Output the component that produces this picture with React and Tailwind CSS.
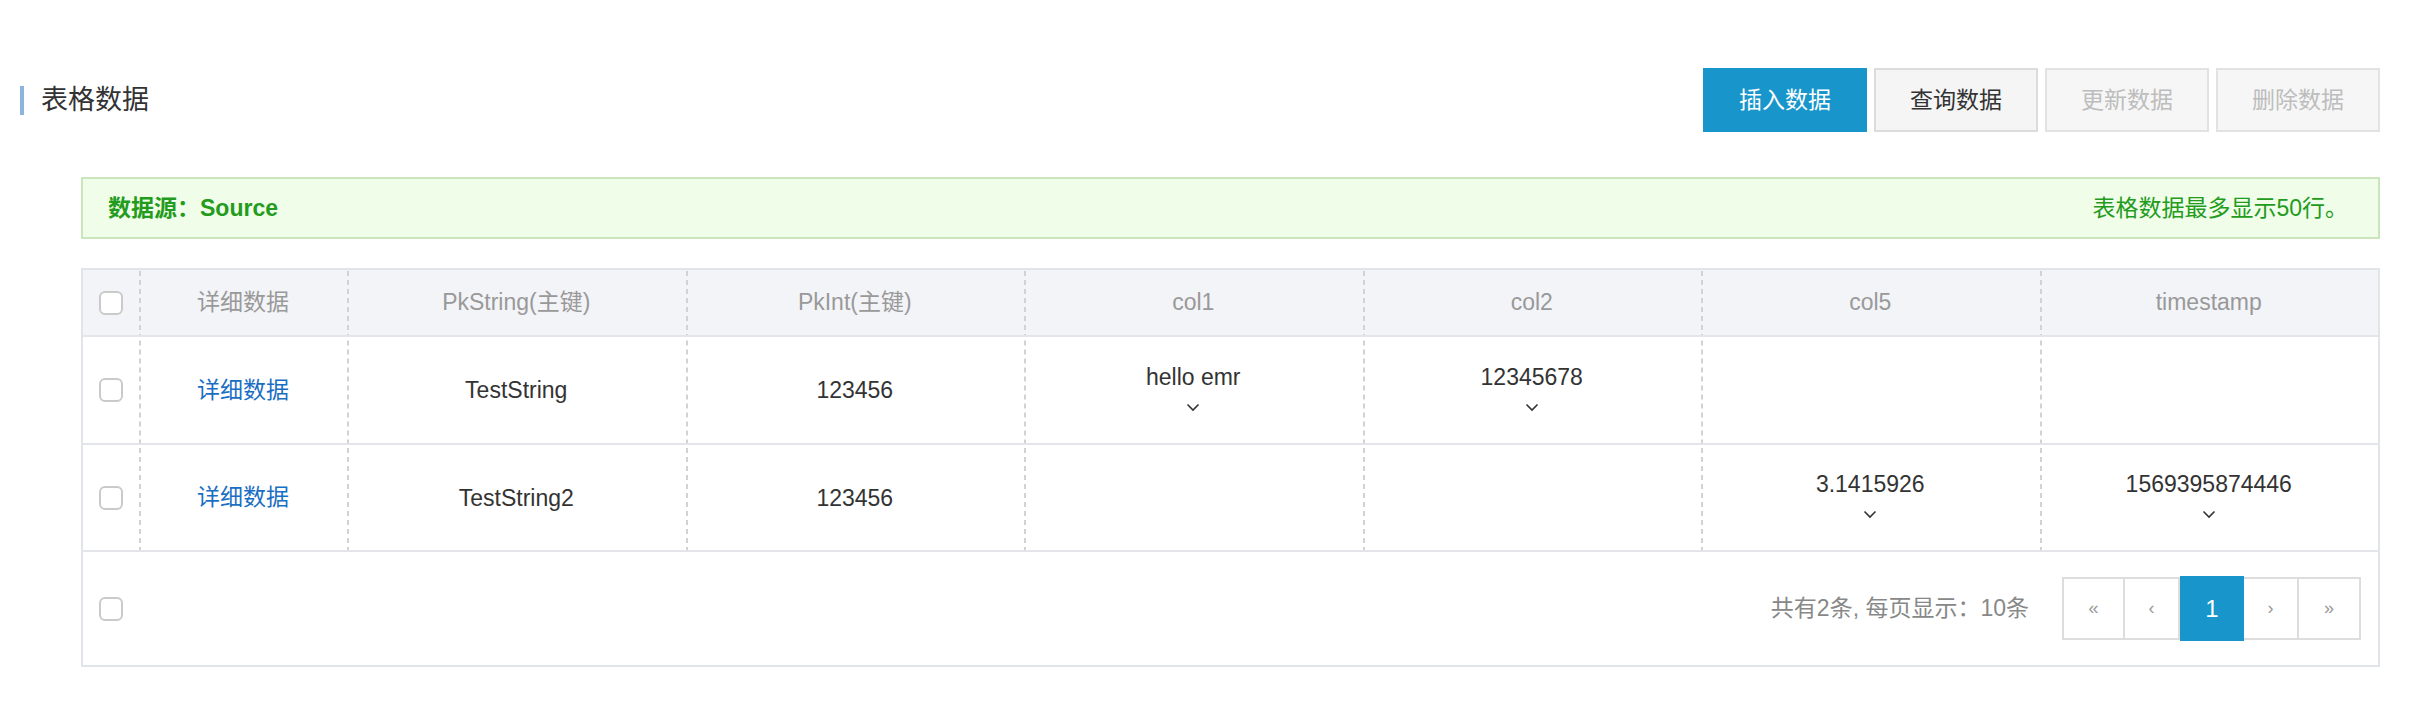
import { Fragment } from "react";

const columns = ["PkString(主键)", "PkInt(主键)", "col1", "col2", "col5", "timestamp"];

const rows = [
  {
    id: 1,
    height: "h-[108px]",
    cells: [
      { value: "TestString" },
      { value: "123456" },
      { value: "hello emr", expand: true },
      { value: "12345678", expand: true },
      { value: "" },
      { value: "" }
    ]
  },
  {
    id: 2,
    height: "h-[107px]",
    cells: [
      { value: "TestString2" },
      { value: "123456" },
      { value: "" },
      { value: "" },
      { value: "3.1415926", expand: true },
      { value: "1569395874446", expand: true }
    ]
  }
];

const gridCols = "grid grid-cols-[56px_208px_repeat(6,minmax(0,1fr))]";
// dashed column divider drawn as a repeating background strip on the cell's left edge
const dashed =
  "bg-[linear-gradient(#d2d2d2_60%,transparent_60%)] bg-[length:2px_9px] bg-repeat-y bg-left";

function Checkbox() {
  return <span className="block h-[24px] w-[24px] rounded-[6px] border-2 border-[#cacaca] bg-white" />;
}

function Chevron() {
  return (
    <svg width="14" height="9" viewBox="0 0 14 9" className="mt-[12px] mb-[6px]">
      <polyline points="1.5,1.5 7,7 12.5,1.5" fill="none" stroke="#333" strokeWidth="1.6" />
    </svg>
  );
}

function Cell({ value, expand }) {
  return (
    <div className={`flex flex-col items-center justify-center ${dashed}`}>
      {value && <span className="leading-[28px] text-[#333]">{value}</span>}
      {expand && <Chevron />}
    </div>
  );
}

export default function App() {
  return (
    <div className="min-h-screen bg-white pl-[20px] pr-[52px] pt-[68px] font-['Liberation_Sans','Noto_Sans_CJK_SC',sans-serif]">
      <div className="flex h-16 items-center justify-between">
        <div className="flex items-center">
          <span className="h-[29px] w-1 bg-[#8db4de]" />
          <h2 className="ml-[17px] text-[27px] leading-none text-[#333]">表格数据</h2>
        </div>
        <div className="flex gap-[7px] text-[23px]">
          <button className="h-16 w-[164px] bg-[#1896cb] text-white">插入数据</button>
          <button className="h-16 w-[164px] border-2 border-[#dcdcdc] bg-[#f5f5f5] text-[#333]">查询数据</button>
          <button className="h-16 w-[164px] border-2 border-[#e2e2e2] bg-[#f6f6f6] text-[#bdbdbd]">更新数据</button>
          <button className="h-16 w-[164px] border-2 border-[#e2e2e2] bg-[#f6f6f6] text-[#bdbdbd]">删除数据</button>
        </div>
      </div>

      <div className="ml-[61px] mt-[45px]">
        <div className="flex h-[62px] items-center justify-between border-2 border-[#cbe5bd] bg-[#f0fde9] pl-[25px] pr-[30px] text-[23px] text-[#239b1c]">
          <span className="font-bold">数据源：Source</span>
          <span>表格数据最多显示50行。</span>
        </div>

        <div className="mt-[29px] border-2 border-[#e1e4e8] text-[23px]">
          <div className={`${gridCols} h-[67px] border-b-2 border-[#e3e5ea] bg-[#f3f4f8] text-[#999]`}>
            <div className="flex items-center justify-center">
              <Checkbox />
            </div>
            <div className={`flex items-center justify-center ${dashed}`}>详细数据</div>
            {columns.map((col) => (
              <div key={col} className={`flex items-center justify-center ${dashed}`}>
                {col}
              </div>
            ))}
          </div>

          {rows.map((row) => (
            <div key={row.id} className={`${gridCols} ${row.height} border-b-2 border-[#e3e5ea]`}>
              <div className="flex items-center justify-center">
                <Checkbox />
              </div>
              <div className={`flex items-center justify-center text-[#1a6ec3] ${dashed}`}>详细数据</div>
              {row.cells.map((cell, index) => (
                <Fragment key={index}>
                  <Cell value={cell.value} expand={cell.expand} />
                </Fragment>
              ))}
            </div>
          ))}

          <div className="flex h-[113px] items-center pr-[17px]">
            <div className="flex w-[56px] items-center justify-center">
              <Checkbox />
            </div>
            <span className="ml-auto mr-[33px] text-[#888]">共有2条, 每页显示：10条</span>
            <div className="flex h-[63px] items-stretch">
              <span className="flex w-[63px] items-center justify-center border-2 border-[#dddddd] text-[18px] text-[#999]">«</span>
              <span className="flex w-[55px] items-center justify-center border-y-2 border-r-2 border-[#dddddd] text-[18px] text-[#999]">‹</span>
              <span className="-my-[1px] flex w-[64px] items-center justify-center bg-[#1896cb] text-[24px] text-white">1</span>
              <span className="flex w-[55px] items-center justify-center border-y-2 border-r-2 border-[#dddddd] text-[18px] text-[#999]">›</span>
              <span className="flex w-[62px] items-center justify-center border-y-2 border-r-2 border-[#dddddd] text-[18px] text-[#999]">»</span>
            </div>
          </div>
        </div>
      </div>
    </div>
  );
}
